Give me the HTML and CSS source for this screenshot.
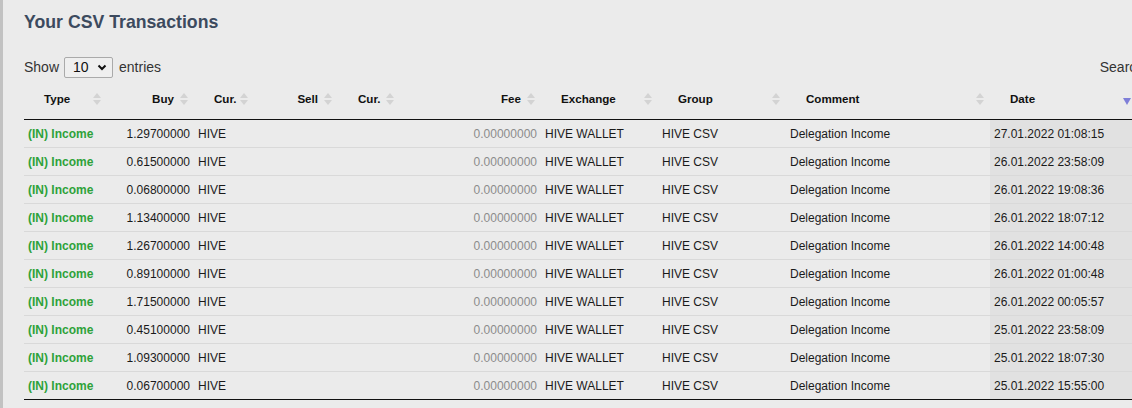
FILE: index.html
```html
<!DOCTYPE html>
<html lang="en">
<head>
<meta charset="utf-8">
<title>Your CSV Transactions</title>
<link rel="stylesheet" href="styles.css">
</head>
<body>
<div class="page">
  <h2 class="title">Your CSV Transactions</h2>
  <div class="dt-wrapper">
    <div class="dt-top">
      <label class="dt-length">Show
        <span class="select-wrap">
          <select class="select"><option>10</option><option>25</option><option>50</option><option>100</option></select>
          <svg class="chev" width="10" height="7" viewBox="0 0 10 7"><path d="M1.5 1.5 L5 5 L8.5 1.5" fill="none" stroke="#111" stroke-width="2"/></svg>
        </span>
        entries</label>
      <label class="dt-filter">Search: <input class="search" type="search"></label>
    </div>
    <table class="dt">
      <colgroup>
        <col class="c-type"><col class="c-buy"><col class="c-cur"><col class="c-sell"><col class="c-cur2"><col class="c-fee"><col class="c-ex"><col class="c-group"><col class="c-comment"><col class="c-date">
      </colgroup>
      <thead>
        <tr>
          <th class="sort">Type</th>
          <th class="sort r">Buy</th>
          <th class="sort">Cur.</th>
          <th class="sort r">Sell</th>
          <th class="sort">Cur.</th>
          <th class="sort r">Fee</th>
          <th class="sort">Exchange</th>
          <th class="sort">Group</th>
          <th class="sort">Comment</th>
          <th class="sort-desc">Date</th>
        </tr>
      </thead>
      <tbody>
        <tr><td class="inc">(IN) Income</td><td class="r">1.29700000</td><td>HIVE</td><td></td><td></td><td class="r fee">0.00000000</td><td>HIVE WALLET</td><td>HIVE CSV</td><td>Delegation Income</td><td class="sorted">27.01.2022 01:08:15</td></tr>
        <tr><td class="inc">(IN) Income</td><td class="r">0.61500000</td><td>HIVE</td><td></td><td></td><td class="r fee">0.00000000</td><td>HIVE WALLET</td><td>HIVE CSV</td><td>Delegation Income</td><td class="sorted">26.01.2022 23:58:09</td></tr>
        <tr><td class="inc">(IN) Income</td><td class="r">0.06800000</td><td>HIVE</td><td></td><td></td><td class="r fee">0.00000000</td><td>HIVE WALLET</td><td>HIVE CSV</td><td>Delegation Income</td><td class="sorted">26.01.2022 19:08:36</td></tr>
        <tr><td class="inc">(IN) Income</td><td class="r">1.13400000</td><td>HIVE</td><td></td><td></td><td class="r fee">0.00000000</td><td>HIVE WALLET</td><td>HIVE CSV</td><td>Delegation Income</td><td class="sorted">26.01.2022 18:07:12</td></tr>
        <tr><td class="inc">(IN) Income</td><td class="r">1.26700000</td><td>HIVE</td><td></td><td></td><td class="r fee">0.00000000</td><td>HIVE WALLET</td><td>HIVE CSV</td><td>Delegation Income</td><td class="sorted">26.01.2022 14:00:48</td></tr>
        <tr><td class="inc">(IN) Income</td><td class="r">0.89100000</td><td>HIVE</td><td></td><td></td><td class="r fee">0.00000000</td><td>HIVE WALLET</td><td>HIVE CSV</td><td>Delegation Income</td><td class="sorted">26.01.2022 01:00:48</td></tr>
        <tr><td class="inc">(IN) Income</td><td class="r">1.71500000</td><td>HIVE</td><td></td><td></td><td class="r fee">0.00000000</td><td>HIVE WALLET</td><td>HIVE CSV</td><td>Delegation Income</td><td class="sorted">26.01.2022 00:05:57</td></tr>
        <tr><td class="inc">(IN) Income</td><td class="r">0.45100000</td><td>HIVE</td><td></td><td></td><td class="r fee">0.00000000</td><td>HIVE WALLET</td><td>HIVE CSV</td><td>Delegation Income</td><td class="sorted">25.01.2022 23:58:09</td></tr>
        <tr><td class="inc">(IN) Income</td><td class="r">1.09300000</td><td>HIVE</td><td></td><td></td><td class="r fee">0.00000000</td><td>HIVE WALLET</td><td>HIVE CSV</td><td>Delegation Income</td><td class="sorted">25.01.2022 18:07:30</td></tr>
        <tr><td class="inc">(IN) Income</td><td class="r">0.06700000</td><td>HIVE</td><td></td><td></td><td class="r fee">0.00000000</td><td>HIVE WALLET</td><td>HIVE CSV</td><td>Delegation Income</td><td class="sorted">25.01.2022 15:55:00</td></tr>
      </tbody>
    </table>
  </div>
</div>
</body>
</html>
```

FILE: styles.css
```css
html, body {
  margin: 0;
  padding: 0;
  background: #ebebeb;
  overflow: hidden;
}
body {
  font-family: "Liberation Sans", Arial, sans-serif;
  color: #222;
  width: 1132px;
  height: 408px;
}
.page {
  border-left: 3px solid #c2c2c2;
  padding: 11px 0 0 21px;
  height: 397px;
  box-sizing: content-box;
}
.title {
  margin: 0;
  font-size: 17.7px;
  line-height: 22px;
  font-weight: bold;
  color: #3c4a5e;
}
.dt-wrapper {
  width: 1278px;
  margin-top: 24px;
}
.dt-top {
  display: flex;
  justify-content: space-between;
  align-items: center;
  height: 20px;
  margin-bottom: 3px;
  font-size: 14px;
  color: #333;
}
.dt-length {
  display: flex;
  align-items: center;
}
.select-wrap {
  position: relative;
  display: inline-block;
  margin: 0 6px 0 5px;
}
.select {
  appearance: none;
  -webkit-appearance: none;
  width: 49px;
  height: 21px;
  box-sizing: border-box;
  border: 1px solid #aaa;
  border-radius: 2px;
  background: #efefef;
  font-family: "Liberation Sans", Arial, sans-serif;
  font-size: 14px;
  color: #111;
  padding: 0 0 0 8px;
  display: block;
}
.chev {
  position: absolute;
  right: 6px;
  top: 7px;
  pointer-events: none;
}
.dt-filter {
  display: flex;
  align-items: center;
  gap: 4px;
}
.search {
  width: 150px;
  height: 20px;
  box-sizing: border-box;
  border: 1px solid #aaa;
  border-radius: 3px;
  background: transparent;
}
.dt {
  width: 1113px;
  table-layout: fixed;
  border-collapse: collapse;
  border-bottom: 1px solid #111;
}
.c-type { width: 83px; }
.c-buy { width: 87px; }
.c-cur { width: 60px; }
.c-sell { width: 84px; }
.c-cur2 { width: 62px; }
.c-fee { width: 141px; }
.c-ex { width: 117px; }
.c-group { width: 128px; }
.c-comment { width: 204px; }
.c-date { width: 147px; }
.dt th {
  position: relative;
  font-size: 11.6px;
  line-height: 16px;
  font-weight: bold;
  color: #111;
  text-align: left;
  padding: 11px 20px 12px;
  border-bottom: 1px solid #111;
  white-space: nowrap;
}
.dt th.r { text-align: right; }
.dt th.sort::before,
.dt th.sort::after {
  content: "";
  position: absolute;
  right: 6px;
  width: 0;
  height: 0;
  border-left: 4px solid transparent;
  border-right: 4px solid transparent;
}
.dt th.sort::before {
  top: 13px;
  border-bottom: 5px solid #d3d3d3;
}
.dt th.sort::after {
  top: 20px;
  border-top: 5px solid #d3d3d3;
}
.dt th.sort-desc::after {
  content: "";
  position: absolute;
  right: 6px;
  top: 18px;
  width: 0;
  height: 0;
  border-left: 4.5px solid transparent;
  border-right: 4.5px solid transparent;
  border-top: 7px solid #7f7fd8;
}
.dt td {
  font-size: 12px;
  line-height: 15px;
  padding: 7px 4px 5px;
  border-top: 1px solid #d9d9d9;
  white-space: nowrap;
  color: #1a1a1a;
}
.dt tbody tr:first-child td { border-top: none; }
.dt td.r { text-align: right; }
.dt td.inc {
  color: #2ea23a;
  font-weight: bold;
}
.dt td.fee { color: #8c8c8c; }
.dt td.sorted { background: #e1e1e1; }
```
